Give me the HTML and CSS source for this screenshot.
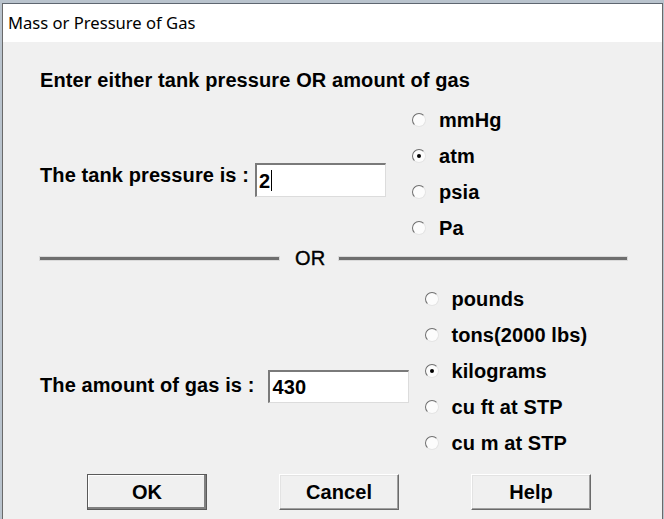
FILE: index.html
```html
<!DOCTYPE html>
<html>
<head>
<meta charset="utf-8">
<link rel="stylesheet" href="styles.css">
</head>
<body>
<div class="window">
  <div class="titlebar">Mass or Pressure of Gas</div>
  <div class="content">
    <p class="heading">Enter either tank pressure OR amount of gas</p>
    <div class="group g1">
      <div class="field">
        <span class="label">The tank pressure is :</span>
        <div class="textbox">2<span class="caret"></span></div>
      </div>
      <div class="radios">
        <div class="opt"><span class="radio"></span><span>mmHg</span></div>
        <div class="opt"><span class="radio on"></span><span>atm</span></div>
        <div class="opt"><span class="radio"></span><span>psia</span></div>
        <div class="opt"><span class="radio"></span><span>Pa</span></div>
      </div>
    </div>
    <div class="sep"><span class="line first"></span><span class="or">OR</span><span class="line rest"></span></div>
    <div class="group g2">
      <div class="field">
        <span class="label">The amount of gas is :</span>
        <div class="textbox">430</div>
      </div>
      <div class="radios">
        <div class="opt"><span class="radio"></span><span>pounds</span></div>
        <div class="opt"><span class="radio"></span><span>tons(2000 lbs)</span></div>
        <div class="opt"><span class="radio on"></span><span>kilograms</span></div>
        <div class="opt"><span class="radio"></span><span>cu ft at STP</span></div>
        <div class="opt"><span class="radio"></span><span>cu m at STP</span></div>
      </div>
    </div>
    <div class="buttons">
      <div class="btn default">OK</div>
      <div class="btn">Cancel</div>
      <div class="btn">Help</div>
    </div>
  </div>
</div>
</body>
</html>
```
FILE: styles.css
```css
html, body {
  margin: 0;
  padding: 0;
}
body {
  width: 664px;
  height: 519px;
  overflow: hidden;
  background: #b9c3cd;
  font-family: "Liberation Sans", Arial, sans-serif;
  color: #000;
}
.window {
  margin: 3px 0 0 2px;
  width: 661px;
  height: 516px;
  box-sizing: border-box;
  border-top: 1px solid #5e6670;
  border-left: 1px solid #6a6a6a;
  border-right: 1px solid #6a6a6a;
  background: #f0f0f0;
}
.titlebar {
  height: 38px;
  line-height: 38px;
  background: #fff;
  padding-left: 5px;
  font-family: "Noto Sans", "Open Sans", sans-serif;
  font-size: 16.6px;
}
.content {
  padding: 26px 0 0 37px;
  font-weight: bold;
  font-size: 20px;
  line-height: 24px;
  letter-spacing: 0.1px;
}
.heading {
  margin: 0;
}
.group {
  display: flex;
  align-items: flex-start;
}
.g1 {
  margin-top: 10px;
}
.g2 {
  margin-top: 11px;
}
.field {
  display: flex;
  align-items: flex-start;
}
.g1 .field {
  margin-top: 61px;
}
.g2 .field {
  margin-top: 89px;
}
.g2 .label {
  margin-top: 3px;
}
.textbox {
  box-sizing: border-box;
  background: #fff;
  border-top: 2px solid #7a7a7a;
  border-left: 2px solid #7a7a7a;
  border-right: 1px solid #dcdcdc;
  border-bottom: 1px solid #dcdcdc;
  padding-left: 2px;
  display: flex;
  align-items: center;
}
.g1 .textbox {
  margin-left: 6px;
  width: 131px;
  height: 34px;
}
.g2 .textbox {
  margin-left: 14px;
  width: 141px;
  height: 33px;
}
.caret {
  display: inline-block;
  width: 1px;
  height: 21px;
  background: #000;
  margin-left: 1px;
}
.g1 .radios {
  margin-left: 26px;
}
.g2 .radios {
  margin-left: 16px;
}
.opt {
  height: 36px;
  display: flex;
  align-items: center;
  gap: 13px;
}
.g2 .opt {
  gap: 12px;
}
.radio {
  width: 14px;
  height: 14px;
  box-sizing: border-box;
  border-radius: 50%;
  border: 1.5px solid;
  border-color: #6e6e6e #e4e4e4 #e4e4e4 #6e6e6e;
  background: #fcfcfc;
  display: flex;
  align-items: center;
  justify-content: center;
}
.radio.on::after {
  content: "";
  width: 4px;
  height: 4px;
  border-radius: 50%;
  background: #000;
}
.sep {
  display: flex;
  align-items: center;
  width: 587px;
  height: 24px;
}
.line {
  height: 3px;
  background: #6e6e6e;
  box-shadow: 0 0 0 1px rgba(150,150,150,0.25);
}
.line.first {
  width: 239px;
}
.line.rest {
  flex: 1;
}
.or {
  margin: 0 14px 0 16px;
  font-weight: normal;
  -webkit-text-stroke: 0.4px #000;
}
.buttons {
  display: flex;
  gap: 72px;
  margin-top: 13px;
  padding-left: 47px;
}
.btn {
  width: 120px;
  height: 36px;
  box-sizing: border-box;
  border: 1px solid;
  border-color: #fff #6a6a6a #6a6a6a #fff;
  box-shadow: inset -1px -1px 0 #a0a0a0, inset 1px 1px 0 #e3e3e3;
  background: #f0f0f0;
  display: flex;
  align-items: center;
  justify-content: center;
}
.btn.default {
  border-color: #5a5a5a;
  box-shadow: inset -2px -2px 0 #808080, inset 1px 1px 0 #fff;
}
```
